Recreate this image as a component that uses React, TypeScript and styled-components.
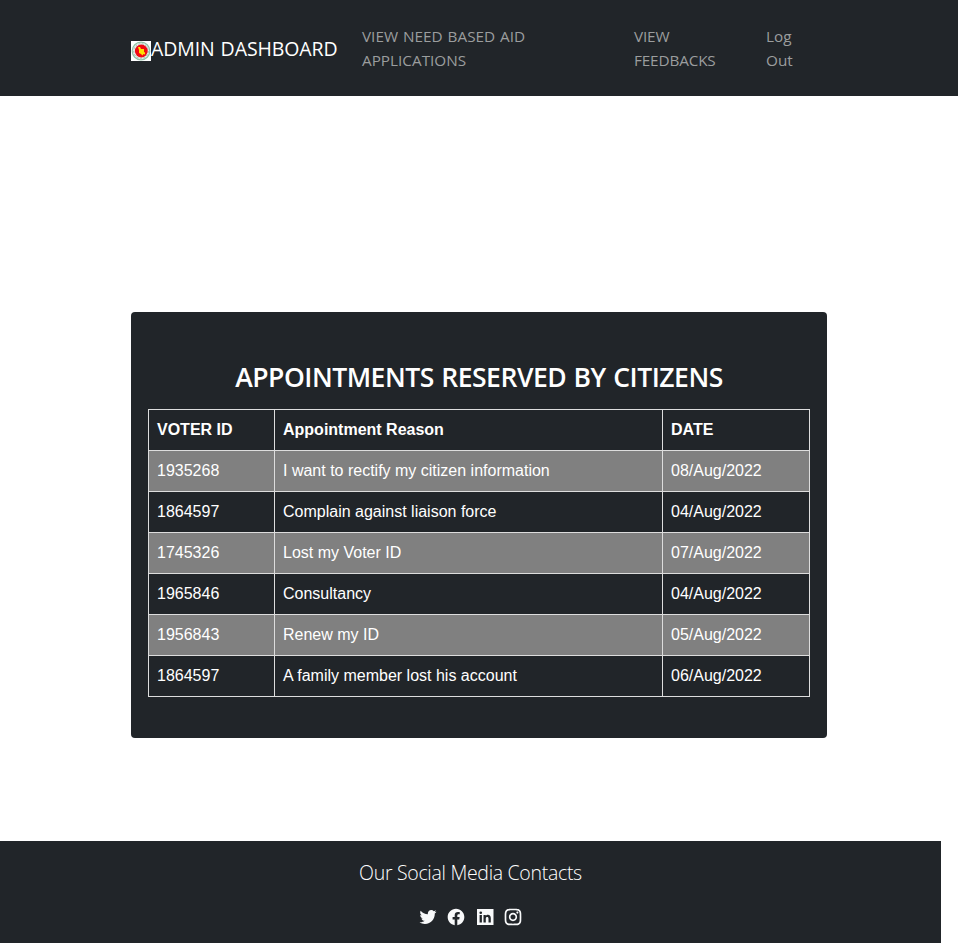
import React from 'react';
import styled, { createGlobalStyle } from 'styled-components';
import { RiTwitterFill, RiFacebookCircleFill, RiInstagramLine } from 'react-icons/ri';

const GlobalStyle = createGlobalStyle`
  *, *::before, *::after { box-sizing: border-box; }
  body {
    margin: 0;
    background: #fff;
    color: #fff;
    font: 400 16px/24px 'Segoe UI', 'Open Sans', 'Noto Sans', sans-serif;
  }
`;

const Page = styled.div`
  height: 943px;
  display: flex;
  flex-direction: column;
  overflow: hidden;
`;

const Navbar = styled.nav`
  flex: none;
  height: 96px;
  padding: 24px 131px;
  display: flex;
  background: #212529;
`;

const Brand = styled.a`
  width: 231px;
  display: flex;
  align-items: center;
  color: #fff;
  font-size: 19.5px;
  line-height: 30px;
  letter-spacing: -0.1px;
  word-spacing: 1px;
  white-space: nowrap;
`;

const BrandText = styled.span`
  padding-top: 1px;
`;

const Emblem = styled.svg`
  flex: none;
  width: 20px;
  height: 20px;
  margin-top: 5px;
`;

const NavLink = styled.a<{ $width: number; $spacing: number }>`
  width: ${(p) => p.$width}px;
  color: #9b9d9e;
  font-size: 15.3px;
  letter-spacing: ${(p) => p.$spacing}px;
  word-spacing: 1px;
  white-space: pre-line;
`;

const Card = styled.main`
  flex: none;
  width: 696px;
  height: 426px;
  margin: 216px 0 0 131px;
  padding: 48px 17px 0;
  border-radius: 4px;
  background: #212529;
`;

const Title = styled.h1`
  margin: 0 0 15px;
  text-align: center;
  font-size: 26.5px;
  line-height: 34px;
  font-weight: 600;
  letter-spacing: -0.47px;
  word-spacing: 1px;
  white-space: nowrap;
`;

const Table = styled.table`
  width: 662px;
  table-layout: fixed;
  border-collapse: collapse;
  font-family: 'Liberation Sans', Arial, sans-serif;
  text-align: left;
`;

const Row = styled.tr<{ $shaded?: boolean }>`
  height: 41px;
  background: ${(p) => (p.$shaded ? '#808080' : 'transparent')};
`;

const Cell = styled.td`
  padding: 8px;
  border: 1px solid #ddd;
  white-space: nowrap;
`;

const Footer = styled.footer`
  flex: none;
  width: 941px;
  height: 102px;
  margin-top: 103px;
  padding-top: 17px;
  display: flex;
  flex-direction: column;
  align-items: center;
  background: #212529;
`;

const FooterTitle = styled.h2`
  margin: 0;
  font-size: 19.5px;
  line-height: 30px;
  font-weight: 300;
  letter-spacing: -0.3px;
`;

const Socials = styled.div`
  display: flex;
  gap: 8.4px;
  margin-top: 19px;
  color: #f8f9fa;

  svg {
    width: 20px;
    height: 20px;
  }
`;

const LinkedinIcon = () => (
  <svg viewBox="0 0 20 20" fill="currentColor">
    <path
      fillRule="evenodd"
      d="M2 2h16.500v16H2zM4.600 8v7.500h2.300V8zM5.750 4.400a1.350 1.350 0 1 0 0 2.700 1.350 1.350 0 0 0 0-2.700zM8.500 8v7.500h2.300v-3.900c0-1 .5-1.700 1.400-1.700s1.300.7 1.300 1.700v3.900h2.300v-4.300c0-2.200-1.100-3.400-2.800-3.400-1.100 0-1.800.5-2.200 1.200V8z"
    />
  </svg>
);

const links = [
  { text: 'VIEW NEED BASED AID\nAPPLICATIONS', width: 272, spacing: 0 },
  { text: 'VIEW\nFEEDBACKS', width: 132, spacing: -0.15 },
  { text: 'Log\nOut', width: 60, spacing: 0 },
];

const appointments = [
  ['1935268', 'I want to rectify my citizen information', '08/Aug/2022'],
  ['1864597', 'Complain against liaison force', '04/Aug/2022'],
  ['1745326', 'Lost my Voter ID', '07/Aug/2022'],
  ['1965846', 'Consultancy', '04/Aug/2022'],
  ['1956843', 'Renew my ID', '05/Aug/2022'],
  ['1864597', 'A family member lost his account', '06/Aug/2022'],
];

export default function App() {
  return (
    <Page>
      <GlobalStyle />
      <Navbar>
        <Brand>
          <Emblem viewBox="0 0 20 20">
            <rect width="20" height="20" fill="#fff" />
            <circle cx="10" cy="10" r="8.800" fill="#e6f1ea" stroke="#8fc3a5" strokeWidth="1.200" />
            <circle cx="10" cy="10" r="7.300" fill="none" stroke="#a9b5ae" strokeWidth="1" strokeDasharray="2 1.5" />
            <circle cx="10.3" cy="10" r="6.400" fill="#f00a12" />
            <path d="M7 6h2l1 2h3v3l1 .500v2l-1.500-.500-1 1.500-1.500-1.500-2-1V9z" fill="#ffe000" />
          </Emblem>
          <BrandText>ADMIN DASHBOARD</BrandText>
        </Brand>
        {links.map((l) => (
          <NavLink key={l.text} $width={l.width} $spacing={l.spacing}>{l.text}</NavLink>
        ))}
      </Navbar>
      <Card>
        <Title>APPOINTMENTS RESERVED BY CITIZENS</Title>
        <Table>
          <colgroup>
            <col width="126" />
            <col width="388" />
            <col width="147" />
          </colgroup>
          <thead>
            <Row>
              <Cell as="th">VOTER ID</Cell>
              <Cell as="th">Appointment Reason</Cell>
              <Cell as="th">DATE</Cell>
            </Row>
          </thead>
          <tbody>
            {appointments.map((cells, i) => (
              <Row key={i} $shaded={i % 2 === 0}>
                {cells.map((c, j) => (
                  <Cell key={j}>{c}</Cell>
                ))}
              </Row>
            ))}
          </tbody>
        </Table>
      </Card>
      <Footer>
        <FooterTitle>Our Social Media Contacts</FooterTitle>
        <Socials>
          <RiTwitterFill />
          <RiFacebookCircleFill />
          <LinkedinIcon />
          <RiInstagramLine />
        </Socials>
      </Footer>
    </Page>
  );
}
